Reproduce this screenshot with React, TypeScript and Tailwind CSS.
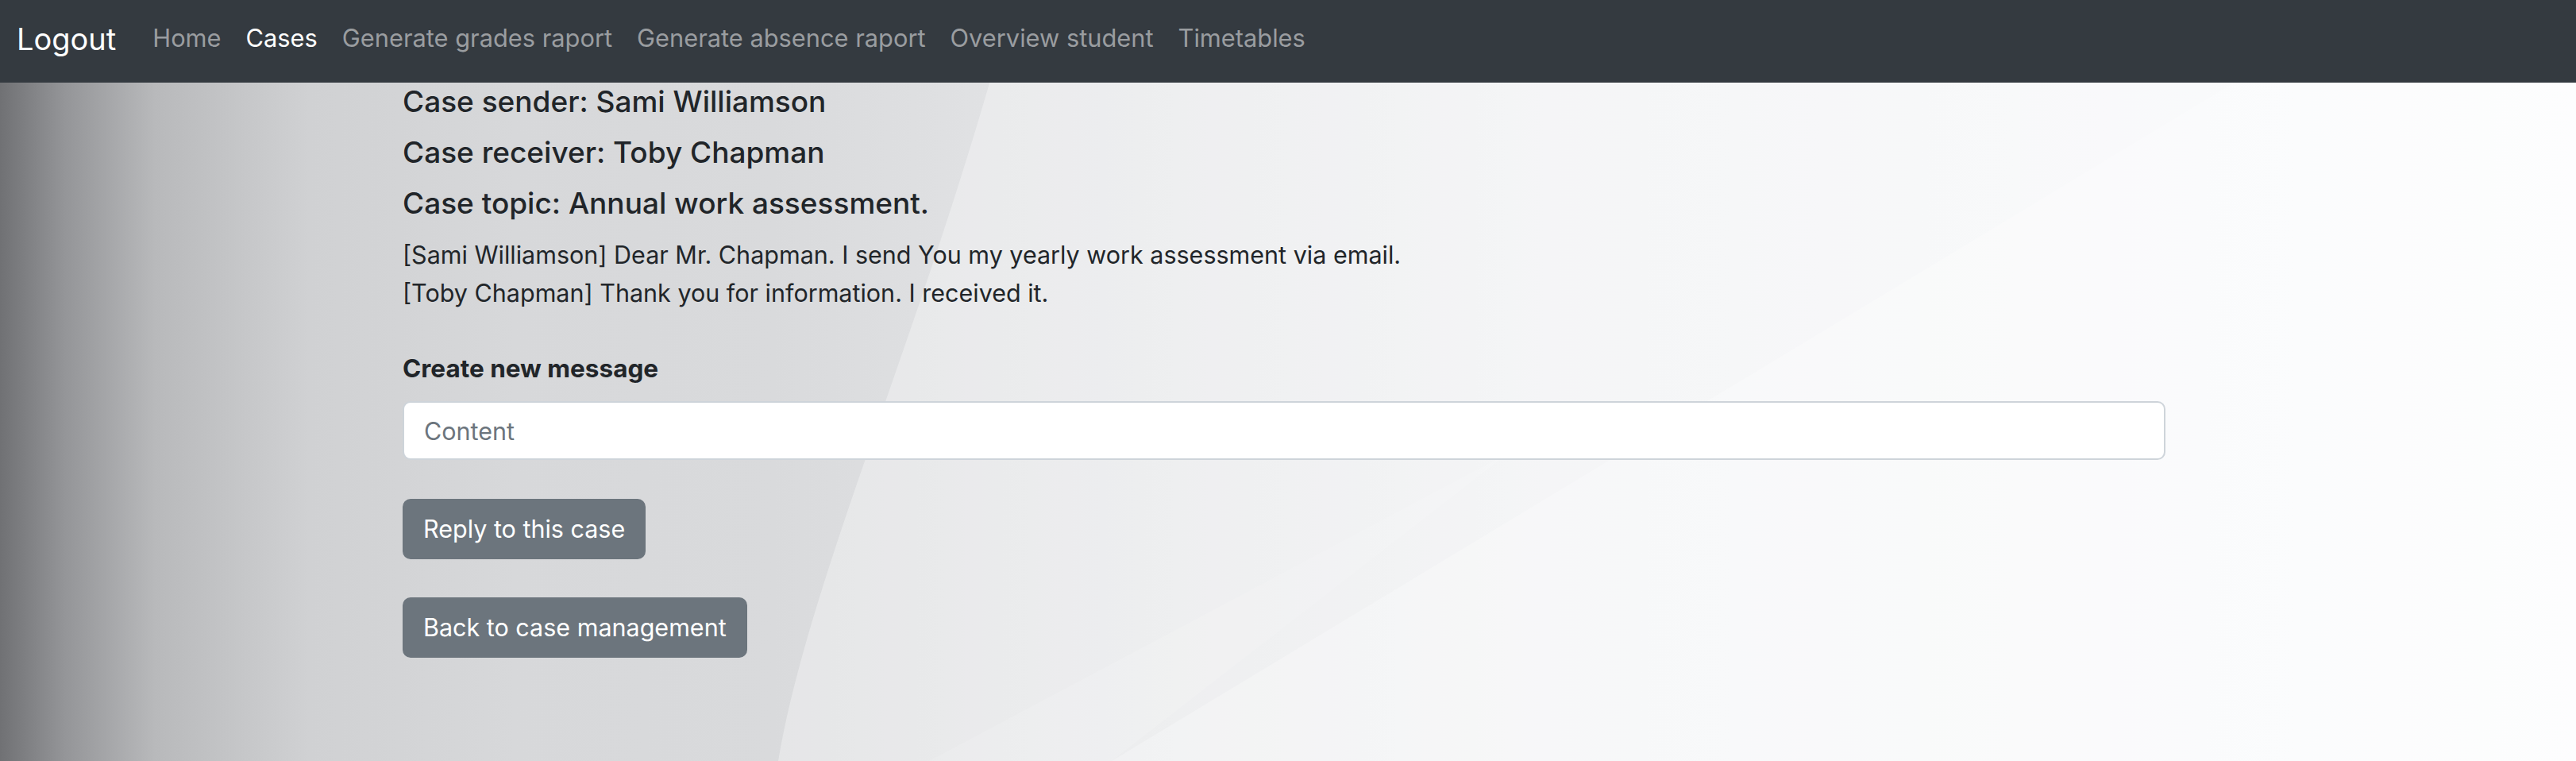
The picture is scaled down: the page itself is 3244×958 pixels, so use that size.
import React from "react";

const navLinks = [
  { name: "Home", active: false },
  { name: "Cases", active: true },
  { name: "Generate grades raport", active: false },
  { name: "Generate absence raport", active: false },
  { name: "Overview student", active: false },
  { name: "Timetables", active: false },
];

const messages = [
  "[Sami Williamson] Dear Mr. Chapman. I send You my yearly work assessment via email.",
  "[Toby Chapman] Thank you for information. I received it.",
];

function Backdrop() {
  return (
    <svg
      className="absolute inset-0 h-full w-full"
      viewBox="0 0 3244 958"
      preserveAspectRatio="none"
    >
      <defs>
        <linearGradient id="base" x1="0" y1="0" x2="1" y2="0">
          <stop offset="0" stopColor="#707174" />
          <stop offset="0.025" stopColor="#949598" />
          <stop offset="0.06" stopColor="#b8b9bb" />
          <stop offset="0.12" stopColor="#d0d1d3" />
          <stop offset="0.2" stopColor="#d7d8da" />
          <stop offset="0.3" stopColor="#d9dadc" />
          <stop offset="0.4" stopColor="#e2e3e5" />
          <stop offset="0.6" stopColor="#f0f1f3" />
          <stop offset="1" stopColor="#fbfcfe" />
        </linearGradient>
      </defs>
      <rect width="3244" height="958" fill="url(#base)" />
      <path d="M1275 0 C1170 400 1020 720 980 958 L3244 958 L3244 0 Z" fill="#ffffff" fillOpacity="0.32" />
      <path d="M2820 100 L1400 958 L3244 958 L3244 100 Z" fill="#ffffff" fillOpacity="0.25" />
      <path d="M1900 570 L1170 958 L1400 958 Z" fill="#ffffff" fillOpacity="0.12" />
    </svg>
  );
}

export default function App() {
  return (
    <div className="relative min-h-[958px] w-full overflow-hidden font-['Inter','Liberation_Sans',sans-serif] text-[#212529]">
      <Backdrop />

      {/* Navbar */}
      <nav className="relative flex h-[104px] items-center bg-[#343a40] px-[21px] pb-[7px]">
        <a href="#" className="mr-[46px] text-[38px] leading-none text-white">
          Logout
        </a>
        <div className="flex items-center gap-[31px]">
          {navLinks.map((link) => (
            <a
              key={link.name}
              href="#"
              className={`text-[30.8px] leading-none ${link.active ? "text-white" : "text-[#9a9da0]"}`}
            >
              {link.name}
            </a>
          ))}
        </div>
      </nav>

      {/* Case details */}
      <main className="relative ml-[507px] w-[2220px]">
        <h5 className="text-[37px] font-medium leading-[48px]">Case sender: Sami Williamson</h5>
        <h5 className="mt-[16px] text-[37px] font-medium leading-[48px]">Case receiver: Toby Chapman</h5>
        <h5 className="mt-[16px] text-[37px] font-medium leading-[48px]">Case topic: Annual work assessment.</h5>

        <div className="mt-[17px]">
          {messages.map((m) => (
            <p key={m} className="text-[30.5px] leading-[48px]">
              {m}
            </p>
          ))}
        </div>

        <label className="mt-[47px] block text-[31.5px] font-bold leading-[48px]">Create new message</label>
        <input
          type="text"
          placeholder="Content"
          className="mt-[17px] block h-[74px] w-full rounded-[10px] border-2 border-[#ced4da] bg-white px-[25px] text-[30.5px] placeholder:text-[#6c757d]"
        />

        <div className="mt-[49px] flex flex-col items-start gap-[48px]">
          <button className="h-[76px] rounded-[10px] bg-[#6c757d] px-[26px] text-[30.5px] text-white">
            Reply to this case
          </button>
          <button className="h-[76px] rounded-[10px] bg-[#6c757d] px-[26px] text-[30.5px] text-white">
            Back to case management
          </button>
        </div>
      </main>
    </div>
  );
}
